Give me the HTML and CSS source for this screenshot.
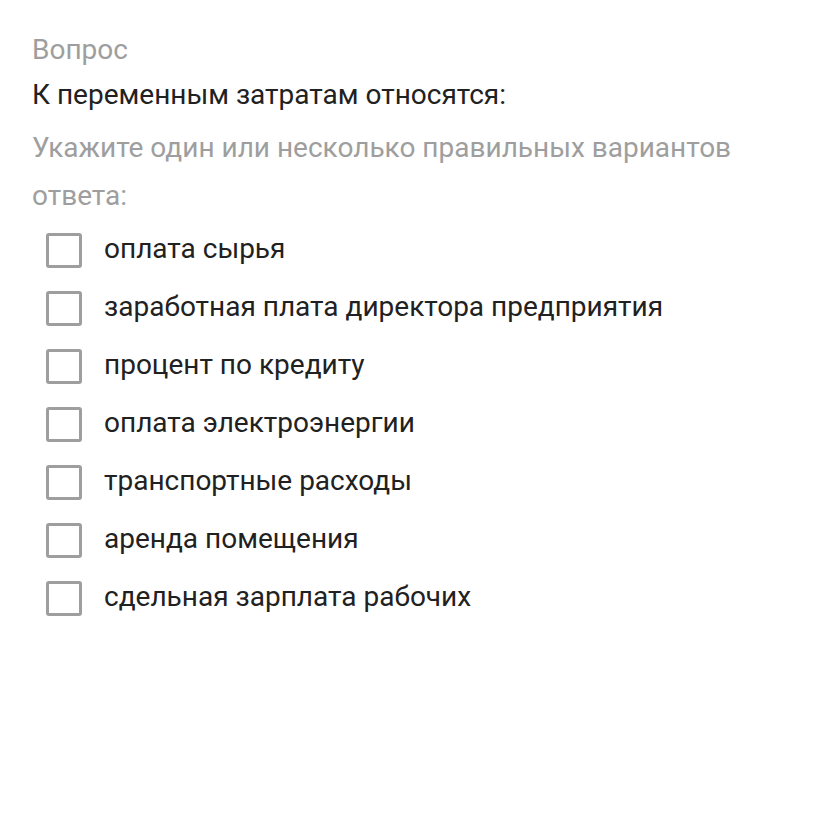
FILE: index.html
```html
<!DOCTYPE html>
<html lang="ru">
<head>
<meta charset="utf-8">
<link rel="stylesheet" href="styles.css">
</head>
<body>
<div class="page">
  <div class="label">Вопрос</div>
  <div class="question">К переменным затратам относятся:</div>
  <div class="hint">Укажите один или несколько правильных вариантов ответа:</div>
  <ul class="options">
    <li class="option"><span class="box"></span><span class="text">оплата сырья</span></li>
    <li class="option"><span class="box"></span><span class="text">заработная плата директора предприятия</span></li>
    <li class="option"><span class="box"></span><span class="text">процент по кредиту</span></li>
    <li class="option"><span class="box"></span><span class="text">оплата электроэнергии</span></li>
    <li class="option"><span class="box"></span><span class="text">транспортные расходы</span></li>
    <li class="option"><span class="box"></span><span class="text">аренда помещения</span></li>
    <li class="option"><span class="box"></span><span class="text">сдельная зарплата рабочих</span></li>
  </ul>
</div>
</body>
</html>
```
FILE: styles.css
```css
html, body {
  margin: 0;
  padding: 0;
  background: #ffffff;
}
.page {
  font-family: Roboto, "Noto Sans", sans-serif;
  padding: 30px 33px 0 32px;
  width: 762px;
}
.label {
  color: #9e9e9e;
  font-size: 28px;
  line-height: 40px;
}
.question {
  color: #212121;
  font-size: 28px;
  line-height: 40px;
  margin-top: 5px;
}
.hint {
  color: #9e9e9e;
  font-size: 28px;
  line-height: 48px;
  margin-top: 9px;
  width: 720px;
}
.options {
  list-style: none;
  margin: 0;
  padding: 0;
}
.option {
  display: flex;
  align-items: center;
  height: 58px;
}
.box {
  box-sizing: border-box;
  width: 36px;
  height: 35px;
  border: 3px solid #9e9e9e;
  border-radius: 3px;
  margin-left: 14px;
  margin-right: 22px;
  margin-top: 3px;
  flex-shrink: 0;
}
.text {
  color: #212121;
  font-size: 28px;
  line-height: 40px;
}
```
